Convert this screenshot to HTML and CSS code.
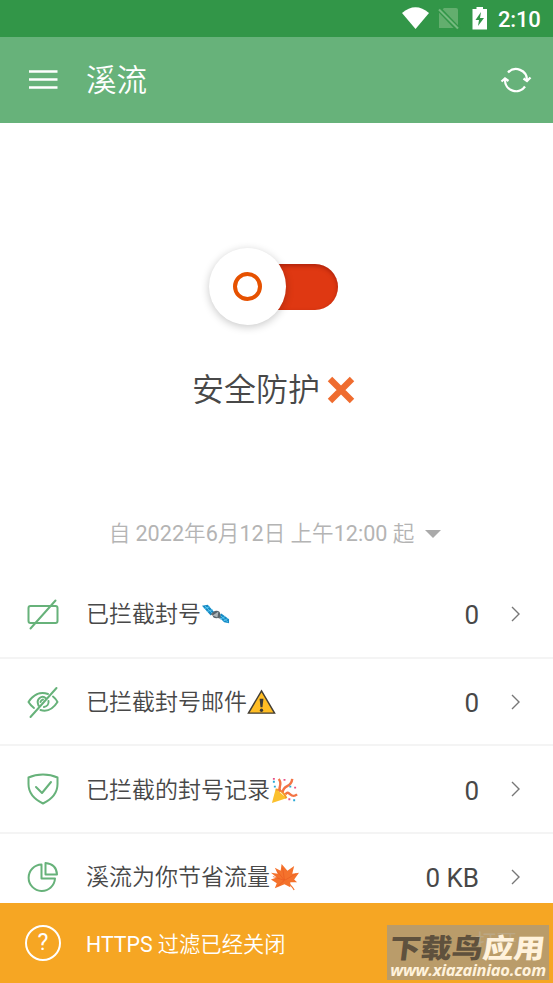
FILE: index.html
```html
<!DOCTYPE html>
<html lang="zh-CN">
<head>
<meta charset="utf-8">
<title>溪流</title>
<link rel="stylesheet" href="styles.css">
</head>
<body>
<div class="screen">
  <div class="status">
    <svg width="108" height="37" viewBox="0 0 108 37">
      <path d="M12 13Q25.500 1.500 39 13L25.500 29Z" fill="#fff"/>
      <path d="M54 8H66Q68 8 68 10V28H49V13Z" fill="#63ae6e"/>
      <path d="M48 8L69 30" stroke="#329648" stroke-width="5"/>
      <path d="M49 9.500L68 28.500" stroke="#76ba80" stroke-width="2"/>
      <path d="M86.500 7H93V9H97V29.500H82.500V9H86.500Z" fill="#fff"/>
      <path d="M91 12L85.500 20H89L88 26L94 18H90Z" fill="#329648"/>
    </svg>
    <span class="clock">2:10</span>
  </div>
  <header class="appbar">
    <svg width="30" height="24" viewBox="0 0 30 24"><path d="M1 3.500H29.500M1 11.500H29.500M1 19.500H29.500" stroke="#fff" stroke-width="2.600"/></svg>
    <h1>溪流</h1>
    <svg width="32" height="28" viewBox="0 0 32 28" fill="none" stroke="#fff" stroke-width="2.300">
      <path d="M8 6.500A11 11 0 0 1 27 14M25 20.500A11 11 0 0 1 5 14"/>
      <path d="M23.500 12.500L27 15L30.500 11.500M1.500 15.500L5 12.500L8.500 15"/>
    </svg>
  </header>
  <main class="hero">
    <div class="switch"><div class="track"></div><div class="knob"></div></div>
    <div class="state"><span>安全防护</span>
      <svg width="30" height="30" viewBox="0 0 30 30"><path d="M4 4L26 26M26 4L4 26" stroke="#ef6c2f" stroke-width="6.300"/></svg>
    </div>
    <div class="since"><span>自 <span class="num">2022</span>年<span class="num">6</span>月<span class="num">12</span>日 上午<span class="num">12:00</span> 起</span><i></i></div>
  </main>
  <section class="list">
    <div class="row">
      <svg class="icon" viewBox="0 0 34 34"><rect x="2.500" y="9" width="29" height="17" rx="2"/><path d="M29.500 3.500L4.500 31.500"/></svg>
      <span class="label">已拦截封号</span>
      <svg class="emoji" viewBox="0 0 30 30">
        <path d="M1 6L7 5L14 13L10 16ZM18 17L21 14L29 20V24L24 23Z" fill="#1689c4"/>
        <path d="M3 9L9 7M6 12L12 10M20 20L25 17M23 22L28 19M4 6L12 14M20 16L28 23" stroke="#55c4ec" stroke-width="1"/>
        <path d="M11 14L20 18" stroke="#777" stroke-width="3"/><circle cx="16" cy="15" r="4" fill="#58646c"/><path d="M12 16L18 12L17 18Z" fill="#aeb5b8"/>
      </svg>
      <span class="value">0</span><svg class="chev" viewBox="0 0 10 16"><path d="M1 1L8 8L1 15"/></svg>
    </div>
    <div class="row">
      <svg class="icon" viewBox="0 0 34 34"><path d="M30.500 3L4.500 32M22 9C14 6 7 10 2.500 17C4 19.500 5.500 21 8 23M27 11.500C29 13 30.500 15 31.500 17C27 24 21 27 14.500 25M12.500 20.500C9.500 14 16 9.500 20 13.500M22.500 16C23 19 21 21.500 18 22M14.500 17Q15 15 17 14.500"/></svg>
      <span class="label">已拦截封号邮件</span>
      <svg class="emoji" viewBox="0 0 30 30"><path d="M15 3L28.500 26H1.500Z" fill="#ffbd24" stroke="#433e35" stroke-width="1.500"/><path d="M13 11H17L16 20H14Z" fill="#383838"/><circle cx="15" cy="23" r="1.700" fill="#383838"/></svg>
      <span class="value">0</span><svg class="chev" viewBox="0 0 10 16"><path d="M1 1L8 8L1 15"/></svg>
    </div>
    <div class="row">
      <svg class="icon" viewBox="0 0 34 34"><path d="M17 2.500Q25 2.500 31.500 5.500V12Q31.500 24.500 17 31.500Q2.500 24.500 2.500 12V5.500Q9 2.500 17 2.500ZM10 15L16 21L25 10"/></svg>
      <span class="label">已拦截的封号记录</span>
      <svg class="emoji" viewBox="0 0 30 30">
        <path d="M2 28L6 13L17 23Z" fill="#fbc02d"/><path d="M6 14Q13 14 17 23" stroke="#f59c23" stroke-width="2" fill="none"/>
        <path d="M11 16C7 12 14 9 9 3M13 17C14 8 22 13 23 3M16 19C20 13 21 25 28 19" stroke="#f37445" stroke-width="2.500" fill="none"/>
        <path d="M3 6H5M20 11H22M24 25H26M4 11H6" stroke="#28a9d6" stroke-width="2"/><path d="M14 4H16M25 12H27M19 24H21M3 3H5" stroke="#e95285" stroke-width="2"/>
      </svg>
      <span class="value">0</span><svg class="chev" viewBox="0 0 10 16"><path d="M1 1L8 8L1 15"/></svg>
    </div>
    <div class="row last">
      <svg class="icon" viewBox="0 0 34 34"><path d="M15.500 4.500V18.500H29A13.200 13.200 0 1 1 15.500 4.500ZM19.500 3V14.500H31Q30.500 4 19.500 3Z"/></svg>
      <span class="label">溪流为你节省流量</span>
      <svg class="emoji" viewBox="0 0 30 30"><path d="M12 1L18 8L25 3L23 11L30 10L25 17L28 20L21 20L21 25L15 22L5 26L7 21L1 17L7 15L1 10L8 11L5 5L11 8Z" fill="#f4722c"/><path d="M13 5L15 18L27 11M15 18L7 8M15 18L3 14M15 18L8 24" stroke="#ea5b20" stroke-width=".7" fill="none"/><path d="M15 18Q22 22 25 28" stroke="#f4722c" stroke-width="1.200" fill="none"/></svg>
      <span class="value">0 KB</span><svg class="chev" viewBox="0 0 10 16"><path d="M1 1L8 8L1 15"/></svg>
    </div>
  </section>
  <footer class="notice">
    <span class="help">?</span>
    <span class="message"><span class="num">HTTPS</span> 过滤已经关闭</span>
    <span class="action">打开</span>
    <div class="mark"><div class="name"><b>下载鸟</b><em>应用</em></div><div class="url">www.xiazainiao.com</div></div>
  </footer>
</div>
</body>
</html>
```
FILE: styles.css
```css
* { box-sizing: border-box; }
body { margin: 0; background: #fff; color: #484848; font-family: Roboto, "Noto Sans CJK SC", sans-serif; }
svg { flex: none; display: block; }
.num { font-weight: 400; }
.screen { width: 553px; height: 983px; display: flex; flex-direction: column; overflow: hidden; }
.status { height: 37px; background: #329648; color: #fff; display: flex; justify-content: flex-end; align-items: center; padding-right: 12px; }
.clock { width: 43px; font-size: 22px; font-weight: 500; letter-spacing: -.2px; line-height: 37px; padding-top: 1px; white-space: nowrap; }
.appbar { height: 86px; background: #67b27a; display: flex; align-items: center; padding: 0 21px 0 28px; color: #fff; }
.appbar h1 { margin: 2px auto 0 28px; font-size: 30.500px; line-height: 40px; font-weight: 350; }
.hero { height: 448px; display: flex; flex-direction: column; align-items: center; padding-top: 125px; }
.switch { width: 130px; height: 77px; display: flex; align-items: center; margin-right: 5px; }
.knob { order: 1; width: 77px; height: 77px; flex: none; border-radius: 50%; background: #fff; box-shadow: 0 2px 8px rgba(0,0,0,.22); display: flex; align-items: center; justify-content: center; z-index: 1; }
.knob::after { content: ""; box-sizing: border-box; width: 29px; height: 29px; border: 4.500px solid #e65100; border-radius: 50%; }
.track { order: 2; width: 76px; height: 46px; flex: none; margin-left: -24px; border-radius: 0 23px 23px 0; background: #df3812; box-shadow: inset 0 2px 4px rgba(100,0,0,.4); }
.state { display: flex; align-items: center; gap: 6px; margin: 42px 5px 0 0; font-size: 32px; line-height: 46px; font-weight: 350; }
.since { display: flex; align-items: center; gap: 11px; margin: 106px 3px 0 0; font-size: 21.600px; line-height: 30px; font-weight: 350; color: #b4b4b4; white-space: nowrap; }
.since i { border: 8px solid transparent; border-top-color: #aaa; border-bottom: 0; }
.list { height: 332px; overflow: hidden; }
.row { height: 87.700px; display: flex; align-items: center; padding: 0 32px 0 26px; border-bottom: 2px solid #f4f4f4; }
.last { border-bottom: 0; padding-bottom: 2px; }
.icon { width: 34px; height: 34px; fill: none; stroke: #67b27a; stroke-width: 2; stroke-linecap: round; stroke-linejoin: round; }
.label { margin: 3px 0 0 26px; font-size: 23px; font-weight: 350; line-height: 34px; white-space: nowrap; }
.emoji { width: 29px; height: 29px; margin-top: 2px; }
.value { margin: 3px 0 0 auto; font-size: 26px; line-height: 34px; }
.chev { width: 10px; height: 16px; margin-left: 32px; fill: none; stroke: #777; stroke-width: 1.400; }
.notice { position: relative; height: 80px; flex: none; background: #f6a623; color: #fff; display: flex; align-items: center; padding: 0 36px 0 25px; }
.help { width: 36px; height: 36px; border: 2.500px solid #fff; border-radius: 50%; font-size: 23px; line-height: 32px; text-align: center; }
.message { margin: -2px 0 0 25px; font-size: 21.300px; font-weight: 350; }
.action { margin: -6px 0 0 auto; font-size: 21px; font-weight: 350; }
.mark { position: absolute; left: 387px; top: 22px; width: 162px; height: 55px; background: rgba(178,155,116,.88); text-align: center; white-space: nowrap; }
.name { font: 900 31px/44px "Noto Sans CJK SC", sans-serif; height: 37px; color: #5f513d; transform: scaleY(.87) skewX(-6deg); }
.name b { font-weight: 900; }
.name em { font-style: normal; color: #fff2dc; }
.url { font: italic bold 16.500px/16px "Open Sans", sans-serif; letter-spacing: -.3px; color: #fff2dc; }
```
